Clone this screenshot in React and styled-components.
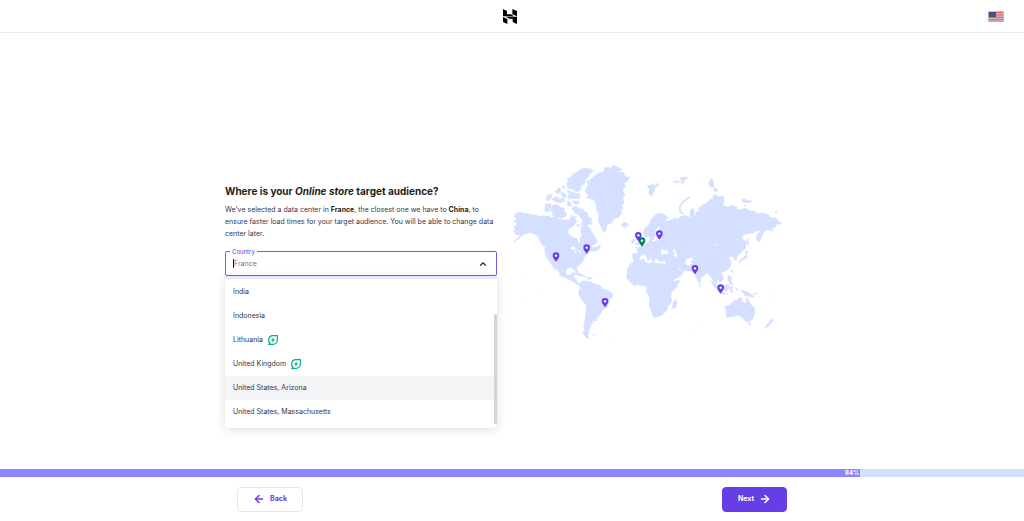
import { useState } from "react";
import styled, { createGlobalStyle } from "styled-components";
import { ArrowLeft, ArrowRight, ChevronUp } from "lucide-react";

const countries = [
    { name: "India" },
    { name: "Indonesia" },
    { name: "Lithuania", eco: true },
    { name: "United Kingdom", eco: true },
    { name: "United States, Arizona" },
    { name: "United States, Massachusetts" },
];

const pins = [
    { x: 153, y: 319 },
    { x: 245, y: 295 },
    { x: 300, y: 456 },
    { x: 400, y: 258 },
    { x: 411, y: 274, selected: true },
    { x: 463, y: 253 },
    { x: 570, y: 357 },
    { x: 647, y: 415 },
];

export default function App() {
    const [country, setCountry] = useState("");
    const [active, setActive] = useState("United States, Arizona");

    return (
        <Page>
            <GlobalStyle />
            <Header>
                <Logo />
                <LanguageButton type="button" aria-label="Language">
                    <Flag />
                </LanguageButton>
            </Header>
            <Main>
                <Content>
                    <Form>
                        <h1>Where is your <em>Online store</em> target audience?</h1>
                        <p>
                            We've selected a data center in <strong>France</strong>, the closest one we have to <strong>China</strong>, to<br />
                            ensure faster load times for your target audience. You will be able to change data<br />
                            center later.
                        </p>
                        <SelectBox>
                            <Field>
                                <legend><label htmlFor="country">Country</label></legend>
                                <Caret />
                                <input
                                    id="country"
                                    role="combobox"
                                    aria-expanded="true"
                                    aria-controls="countries"
                                    autoComplete="off"
                                    placeholder="France"
                                    value={country}
                                    onChange={(e) => setCountry(e.target.value)}
                                />
                                <ChevronUp size={10} strokeWidth={3} />
                            </Field>
                            <Menu>
                                <Options id="countries" role="listbox">
                                    {countries.map((c) => (
                                        <li key={c.name} role="presentation">
                                            <Option
                                                type="button"
                                                role="option"
                                                aria-selected={country === c.name}
                                                $active={active === c.name}
                                                onMouseEnter={() => setActive(c.name)}
                                                onClick={() => setCountry(c.name)}
                                            >
                                                {c.name}
                                                {c.eco && <Leaf />}
                                            </Option>
                                        </li>
                                    ))}
                                </Options>
                                <Thumb />
                            </Menu>
                        </SelectBox>
                    </Form>
                    <WorldMap />
                </Content>
            </Main>
            <Progress role="progressbar" aria-valuenow={84} aria-label="Setup progress">
                <Bar style={{ width: "84%" }}>84%</Bar>
            </Progress>
            <Footer>
                <Actions>
                    <Button type="button"><ArrowLeft size={12} strokeWidth={3} />Back</Button>
                    <Button type="button" $primary>Next<ArrowRight size={12} strokeWidth={3} /></Button>
                </Actions>
            </Footer>
        </Page>
    );
}

function Logo() {
    return (
        <svg width="14" height="15" viewBox="0 0 42 45" aria-label="Hostinger" role="img">
            <path d="M0 0l12 6v10h12l9 5.5H0zM28 0l14 6v16l-14-6zM42 23.5V45l-13-6V29H18l-9-5.5zM0 24l13 6v15L0 39z" />
        </svg>
    );
}

function Flag() {
    return (
        <svg width="16" height="11" viewBox="0 0 32 22" aria-hidden="true">
            <rect width="32" height="22" rx="3" fill="#e3d9dc" />
            <path d="M1 3h30M1 6.4h30M1 9.8h30M1 13.2h30M1 16.6h30M1 20h30" stroke="#d0566a" strokeWidth="1.9" />
            <path d="M1 2h15v10H1z" fill="#484f89" />
            <rect x=".7" y=".7" width="30.6" height="20.6" rx="2.5" fill="none" stroke="#b6aeb5" strokeWidth="1.4" />
        </svg>
    );
}

function Leaf() {
    return (
        <svg width="10" height="10" viewBox="0 0 20 20" fill="none" stroke="#00b090" aria-hidden="true">
            <path d="M9 1.3h9.7V10A8.7 8.7 0 0 1 10 18.7H1.3l2.5-2.6A8.6 8.6 0 0 1 9 1.3z" strokeWidth="2.4" strokeLinejoin="round" />
            <path d="M11.4 4.5 5.8 11h3.4L8.6 15.5l5.6-6.5h-3.4z" fill="#00b090" stroke="none" />
        </svg>
    );
}

function WorldMap() {
    return (
        <MapSvg viewBox="24 18 816 540" role="img" aria-label="Data center locations">
            <g fill="#d5dfff" stroke="#d5dfff" strokeWidth="2" strokeLinejoin="round">
                {/* north america */}
                <path d="M28 184 35 174 50 171 58 176 66 175 80 179 96 181 100 185 118 183 134 184 139 189 150 186 158 193 168 191 173 196 184 194 190 198 197 189 202 180 206 188 214 183 209 196 217 198 211 205 206 212 192 220 188 230 193 240 204 247 216 251 219 263 227 265 225 250 231 242 227 228 229 216 236 206 243 208 248 216 256 221 260 234 265 236 273 252 277 262 269 268 257 272 262 278 274 276 282 283 268 289 256 287 247 296 239 304 234 317 226 328 216 334 215 342 221 354 217 358 209 345 199 338 187 340 181 350 184 360 196 361 201 354 212 353 208 363 200 367 214 371 215 382 224 387 233 383 226 392 212 386 202 378 188 371 166 362 163 352 149 334 142 323 153 346 148 342 133 318 122 303 119 285 122 276 111 270 104 255 99 243 85 235 72 232 64 238 57 236 49 244 39 253 25 261 42 246 46 238 34 239 26 229 34 223 24 217 35 212 36 204 26 199 37 195z" />
                <path d="M188 97 184 86 191 80 187 73 198 65 205 56 218 52 224 44 240 40 256 42 265 48 252 58 247 70 240 75 238 86 226 94 228 103 216 110 205 107 210 99 199 103z" />
                <path d="M200 159 214 153 222 162 232 161 238 169 246 173 249 186 260 190 257 199 263 207 251 207 244 217 238 205 227 209 236 195 228 190 221 178 210 174z" />
                <path d="M143 151 157 149 169 158 178 159 176 169 184 181 174 189 161 187 153 191 142 182 145 174 137 169zM121 148 135 146 140 154 130 170 120 170zM190 118 212 122 226 120 223 131 204 130 190 132zM124 126 137 117 141 123 130 138 124 135zM151 109 164 97 168 108 157 117zM139 132 155 125 164 133 176 128 180 138 164 143 150 139zM168 110 181 117 184 127 171 125zM186 104 204 113 224 116 216 119 195 119zM188 138 198 145 199 153 188 153zM202 139 220 138 225 143 211 148zM176 170 186 176 181 185zM214 210 224 209 220 217zM171 97 177 93 181 102z" />
                <path d="M240 108 250 88 244 82 265 68 269 62 282 54 295 51 302 37 316 39 326 31 341 38 350 44 336 49 355 53 363 67 374 66 366 80 357 85 361 96 352 106 360 120 353 130 357 144 350 149 354 160 347 166 351 173 340 188 328 190 319 204 307 208 300 232 292 225 284 206 280 193 283 180 276 167 274 149 268 136 256 131 245 128 249 120z" />
                <path d="M350 209 357 202 367 205 371 211 360 217 351 215zM274 277 285 271 286 282zM211 359 224 355 243 365 230 363zM245 366 263 370 249 373z" />
                {/* south america */}
                <path d="M224 384 233 378 248 379 257 380 266 386 282 390 291 397 290 403 308 406 323 417 321 427 314 435 311 447 306 457 295 461 289 471 281 484 272 488 275 496 262 499 263 506 256 510 257 519 249 526 252 534 247 541 252 551 242 546 234 536 238 524 236 510 241 490 244 466 243 449 230 435 220 415 225 401zM264 538 270 538 266 542z" />
                {/* africa */}
                <path d="M386 318 402 315 418 313 421 322 435 327 440 321 452 325 464 326 475 326 480 334 488 352 495 367 505 379 524 376 519 388 510 402 499 413 497 425 500 435 495 447 487 455 486 466 475 476 464 484 446 487 440 472 435 458 432 446 435 430 425 411 426 394 411 391 400 389 387 391 373 378 364 367 367 358 366 344 375 329z" />
                <path d="M504 444 512 434 517 445 509 460 502 460z" />
                {/* europe and asia */}
                <path d="M384 312 383 297 400 295 397 282 392 278 407 276 419 269 432 262 434 249 440 251 440 261 456 258 466 252 466 241 477 238 464 236 461 225 469 211 458 216 450 229 453 237 445 254 438 254 434 243 422 246 415 235 420 220 431 211 439 192 453 178 468 175 478 179 491 189 480 192 485 200 496 196 507 190 521 192 525 185 538 182 551 185 557 190 555 170 562 160 568 165 567 181 572 185 574 170 584 169 580 161 595 149 606 144 614 134 624 131 625 121 634 119 640 126 653 123 658 134 654 151 666 156 680 151 696 157 698 164 708 164 720 160 735 168 750 168 758 177 773 174 792 181 796 188 812 189 830 207 816 207 811 216 801 218 803 228 788 224 779 227 771 241 764 261 755 255 755 242 767 228 756 226 747 233 734 235 716 238 711 250 724 261 721 279 707 294 696 304 693 318 686 308 680 304 670 307 678 321 675 336 662 349 648 352 656 371 646 382 638 371 633 388 642 405 632 395 624 375 617 363 607 355 588 368 584 387 576 374 570 356 560 348 540 347 525 343 518 336 512 331 523 347 536 348 528 362 502 376 490 354 480 334 482 317 464 320 456 312 447 309 451 320 443 318 437 308 427 297 436 313 429 317 425 305 416 297 407 302 401 316 392 320z" />
                <path d="M390 268 398 264 399 256 394 249 392 239 398 242 406 262 402 270zM381 255 388 252 387 264 380 264zM583 388 588 394 584 395z" />
                {/* arctic islands */}
                <path d="M427 92 437 91 441 87 448 92 459 85 462 91 450 96 448 106 440 123 431 115 434 104zM505 80 515 78 524 79 516 84zM525 71 533 66 548 68 541 75 529 76zM525 80 539 78 533 86zM614 75 621 72 626 82 627 94 618 98 611 87zM626 97 638 104 635 110 627 107zM710 133 722 132 727 137 741 138 738 142 716 143zM718 151 725 152 719 154zM809 170 818 171 814 174z" />
                <path d="M526 172 524 155 532 142 554 126M526 172 536 176" fill="none" strokeWidth="5" />
                {/* japan, south east asia, oceania */}
                <path d="M723 284 730 291 724 296zM724 296 727 308 716 314 704 320 710 310 719 306zM727 250 731 270 726 266zM703 319 705 324 700 323zM681 343 683 350 678 350zM618 378 629 386 642 400 640 407 626 393zM640 411 653 412 668 417 654 417zM656 394 670 387 672 397 666 409 656 405zM674 396 684 397 679 403 684 412 677 411zM670 361 678 366 679 380 684 389 677 388 669 376zM708 407 716 407 728 412 744 421 748 428 732 423 720 423 717 414zM693 398 698 403 694 408zM749 413 756 416 748 419z" />
                <path d="M660 455 676 450 686 437 696 437 701 429 711 430 710 439 722 446 726 427 735 446 747 458 750 471 744 489 733 500 721 498 714 489 709 486 700 480 684 485 664 486 664 472zM730 505 737 505 734 511zM797 492 805 496 798 505 791 505zM791 504 795 509 782 520 780 516z" />
                <path d="M45 356h3M51 424h2M108 420h2M755 415h2M761 424h3M776 449l4 3M800 423h3M587 498h3M559 531h3M317 548h2M809 412h2M501 79h2M580 77h3" />
            </g>
            <g fill="#fff">
                <path d="M468 288 475 283 480 288 484 284 492 296 480 296 468 299zM503 285 512 282 511 291 516 298 514 307 506 303 508 294zM542 315 550 310 561 309 564 315 555 321 562 325 552 332 540 326zM195 279 207 274 213 282 203 286zM210 286 215 286 213 296 208 293zM218 284 226 289 228 295 221 291zM630 272l8-9-2 8z" />
            </g>
            <g fill="none" stroke="#e3e9ff" strokeWidth="1.2">
                <path d="M118 270h80l15 8M128 318l18 3 16 11M510 264l22-12 16-2 20 10 20 12 24-6 24 8 26-8 22 10M568 262l-12 20-20-6-18 4M588 272l24 20 34 2 22-16M554 302l24-12 22 12M578 304l12 24 34 16 18 12M560 345l16-22 14 4M386 340l20-8 10-18M386 340l28 22 26-10M440 322l4 30 22 12 2-34M400 388l-4-24 20-2M424 388l10-16 28 6 30-14M428 408l28-8 12 22 28-2M436 440l28 4 4-20M464 444l20 6M440 470l22-8 20-10M466 364l6 24 20 10M242 382l10 22-18 14M254 400l34-4M244 446l16-12-10-16M260 434l18 22-18 12M246 466l8 32-6 38M400 296l16 4M418 270l8 16 14-8 20 2M440 260l2 18 12 12M460 280l22-6 22 8M456 258l10 16M484 318l16-8 14 16M488 334l20-2M498 352l16-8" />
            </g>
            {pins.map((p) => (
                <g key={`${p.x}-${p.y}`} transform={`translate(${p.x} ${p.y})`}>
                    <path d="M0 1C-4-5-10-11-10-17a10 10 0 0 1 20 0C10-11 4-5 0 1z" fill={p.selected ? "#008361" : "#673de6"} />
                    <circle cy="-17" r="3.6" fill="#fff" />
                </g>
            ))}
        </MapSvg>
    );
}

const GlobalStyle = createGlobalStyle`
    * {
        box-sizing: border-box;
    }

    body {
        margin: 0;
        background: #fff;
        color: #36344d;
        font: 400 7px/12px Inter, sans-serif;
    }

    button, input {
        font: inherit;
        color: inherit;
    }
`

const Page = styled.div`
    min-height: 100vh;
    display: flex;
    flex-direction: column;
`

const Header = styled.header`
    height: 33px;
    padding: 0 20px 0 16px;
    display: grid;
    grid-template-columns: 1fr auto 1fr;
    align-items: center;
    border-bottom: 1px solid #ebebee;

    > svg {
        grid-column: 2;
    }
`

const LanguageButton = styled.button`
    justify-self: end;
    display: flex;
    padding: 0;
    border: none;
    background: none;
    cursor: pointer;
`

const Main = styled.main`
    flex: 1;
    display: flex;
    align-items: center;
    justify-content: center;
`

const Content = styled.div`
    width: 100%;
    max-width: 574px;
    display: grid;
    grid-template-columns: 272px 1fr;
    gap: 16px;
    align-items: center;
`

const Form = styled.form`
    padding-bottom: 42px;

    h1 {
        margin: 0 0 6px;
        font-size: 10px;
        line-height: 14px;
        font-weight: 700;
        color: #1d1e20;
        white-space: nowrap;
    }

    p {
        margin: 0 0 8px;
        white-space: nowrap;
    }

    strong {
        color: #1d1e20;
    }
`

const SelectBox = styled.div`
    position: relative;
`

const Field = styled.fieldset`
    height: 28px;
    margin: 0;
    padding: 0 8px 3px 7px;
    display: flex;
    align-items: center;
    border: 1px solid #7a55ea;
    border-radius: 2px;

    legend {
        margin-left: -3px;
        padding: 0 2px;
        font-size: 6px;
        line-height: 7px;
        color: #673de6;
    }

    input {
        flex: 1;
        min-width: 0;
        padding: 0;
        border: none;
        outline: none;
        background: none;
    }

    input::placeholder {
        color: #727586;
        opacity: 1;
    }
`

const Caret = styled.span`
    width: 1px;
    height: 9px;
    background: #1d1e20;
`

const Menu = styled.div`
    position: absolute;
    top: 100%;
    left: 0;
    right: 0;
    border-top: 3px solid #ebe4ff;
    border-radius: 0 0 4px 4px;
    background: #fff;
    box-shadow: 0 2px 10px rgba(29, 30, 32, 0.14);
`

const Options = styled.ul`
    margin: 0;
    padding: 1px 3px 4px 0;
    list-style: none;
`

const Option = styled.button`
    width: 100%;
    height: 24px;
    padding: 0 8px;
    display: flex;
    align-items: center;
    gap: 5px;
    border: none;
    background: ${({ $active }) => ($active ? "#f4f5f7" : "none")};
    text-align: left;
    cursor: pointer;
`

const Thumb = styled.span`
    position: absolute;
    right: 0;
    bottom: 4px;
    width: 3px;
    height: 110px;
    border-radius: 2px;
    background: #d3d3d3;
`

const MapSvg = styled.svg`
    width: 272px;
    height: 180px;
`

const Progress = styled.div`
    height: 8px;
    background: #d5dfff;
`

const Bar = styled.div`
    height: 8px;
    padding-right: 1px;
    background: #8c85ff;
    color: #fff;
    font-size: 6px;
    line-height: 8px;
    font-weight: 700;
    text-align: right;
`

const Footer = styled.footer`
    height: 44px;
    display: flex;
    align-items: center;
    justify-content: center;
`

const Actions = styled.div`
    width: 100%;
    max-width: 550px;
    display: flex;
    justify-content: space-between;
`

const Button = styled.button`
    width: ${({ $primary }) => ($primary ? "65px" : "66px")};
    height: 25px;
    padding: 0;
    display: flex;
    align-items: center;
    justify-content: center;
    gap: 5px;
    border: 1px solid ${({ $primary }) => ($primary ? "#673de6" : "#e6e7ec")};
    border-radius: 4px;
    background: ${({ $primary }) => ($primary ? "#673de6" : "#fff")};
    color: ${({ $primary }) => ($primary ? "#fff" : "#673de6")};
    font-weight: 700;
    cursor: pointer;
`
